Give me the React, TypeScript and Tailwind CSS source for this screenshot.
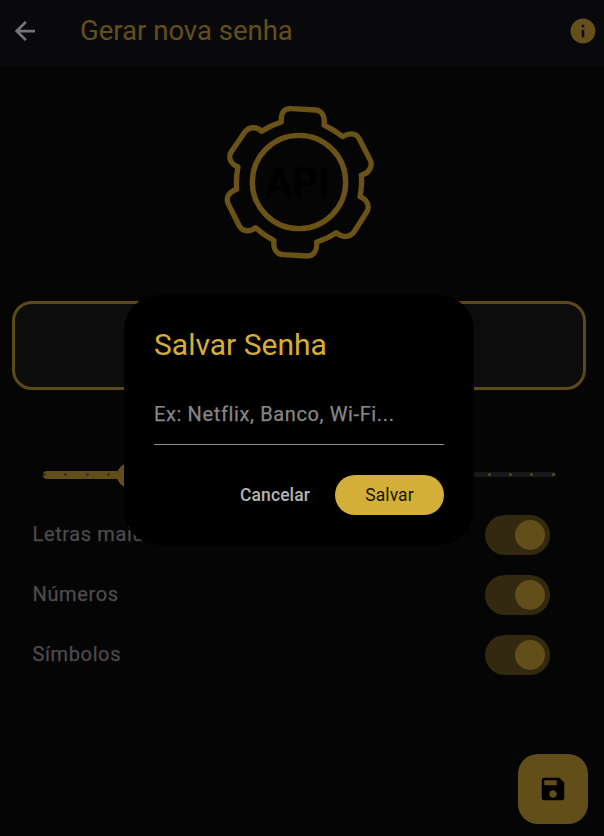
import { MdInfo, MdSave } from "react-icons/md";

const ticks = Array.from({ length: 25 }, (_, i) => i);
const value = 4;

function BackArrow() {
  return (
    <svg viewBox="0 0 24 24" className="h-[30px] w-[30px] text-[#757577]" fill="none" stroke="currentColor" strokeWidth="2.2">
      <path d="M20 12H5.4M12.7 4.7L5.4 12L12.7 19.3" />
    </svg>
  );
}

function GearLogo() {
  return (
    <div className="relative ml-[214px] mt-[30px] flex h-[170px] w-[170px] items-center justify-center">
      <svg viewBox="0 0 510 510" className="absolute inset-0 h-full w-full" fill="none" stroke="#6b5217" strokeWidth="16" strokeLinejoin="round">
        <circle cx="255" cy="258" r="140" />
        <path d="M202 78C200 51 210 36 233 38L305 42C324 43 334 62 330 87Q361 102 386 122C405 111 424 110 435 127L470 195C476 215 463 232 442 237Q445 270 438 302C458 309 467 328 460 345L420 408C406 426 383 425 367 410Q339 429 308 438C310 463 300 480 280 480L207 476C186 475 177 458 180 433Q151 419 125 395C108 408 86 408 76 390L42 322C34 303 47 287 68 280Q65 247 72 213C52 204 42 188 50 170L93 107C108 90 130 93 143 106Q170 88 202 78Z" />
      </svg>
      <span className="relative pr-px pt-[3px] text-[38px] font-medium leading-none tracking-[1.5px] text-black [-webkit-text-stroke:1.5px_black] [stroke-linejoin:round]">API</span>
    </div>
  );
}

function LengthSlider() {
  return (
    <div className="relative ml-[42.5px] mt-[72px] flex h-[26px] w-[513px] items-center">
      <div className="-mt-px h-[5px] w-full rounded-full bg-[#18181a]" />
      <div className="absolute left-0 top-[9px] h-2 w-[88px] rounded-full bg-[#624e19]" />
      {ticks.map((i) => (
        <span
          key={i}
          className={
            i <= value
              ? "absolute top-[11px] h-[3px] w-[3px] rounded-full bg-[#3c3019]"
              : "absolute top-[11px] h-[3px] w-[3px] rounded-full bg-[#5a481b]"
          }
          style={{ left: 0.7 + i * 21.18 }}
        />
      ))}
      <div className="absolute left-[74.5px] top-[0.5px] h-[25px] w-[25px] rounded-full bg-[#624e19]" />
    </div>
  );
}

function Option({ label }: { label: string }) {
  return (
    <div className="flex h-[60px] items-center justify-between pl-[32.5px] pr-[54px]">
      <span className="pb-0.5 text-[20px] tracking-[0.625px] text-[#4c4c4c] [-webkit-text-stroke:0.25px_#4c4c4c]">{label}</span>
      <div className="flex h-10 w-[65px] items-center justify-end rounded-full bg-[#322910] pr-[5px]">
        <div className="h-[30px] w-[30px] rounded-full bg-[#624e19]" />
      </div>
    </div>
  );
}

function SaveDialog() {
  return (
    <div className="absolute left-[124px] top-[295px] flex h-[250px] w-[350px] flex-col rounded-[35px] bg-black px-[30px] pt-[30px]">
      <h2 className="text-[30px] leading-10 text-[#d4af37]">Salvar Senha</h2>
      <div className="mt-5 flex h-[60px] items-center border-b border-[#8e8e93] pb-0.5 text-[20px] tracking-[0.625px] text-[#868686] [-webkit-text-stroke:0.25px_#868686]">
        Ex: Netflix, Banco, Wi-Fi...
      </div>
      <div className="mt-[30px] flex items-center justify-end gap-[25px] text-[17.5px] tracking-[0.1px]">
        <button className="font-medium text-[#b3b3b3]">Cancelar</button>
        <button className="h-10 w-[109px] rounded-full bg-[#d4af37] text-[#171306]">Salvar</button>
      </div>
    </div>
  );
}

export default function App() {
  return (
    <div className="relative h-[836px] w-[604px] overflow-hidden bg-[#050505] font-[Roboto,sans-serif]">
      <header className="flex h-[66px] items-center bg-[#09090b] pb-1 pl-[10px] pr-[6px]">
        <BackArrow />
        <h1 className="ml-10 flex-1 text-[27.5px] text-[#634f1a]">Gerar nova senha</h1>
        <MdInfo className="h-[30px] w-[30px] text-[#654f1a]" />
      </header>
      <GearLogo />
      <div className="ml-[12px] mt-[35px] h-[89px] w-[574px] rounded-[20px] border-[3px] border-[#5c4918] bg-[#0c0c0c]" />
      <LengthSlider />
      <div className="mt-[17px]">
        <Option label="Letras maiúsculas" />
        <Option label="Números" />
        <Option label="Símbolos" />
      </div>
      <div className="absolute left-[518px] top-[754px] flex h-[70px] w-[70px] items-center justify-center rounded-[20px] bg-[#624e19]">
        <MdSave className="h-[30px] w-[30px] text-black" />
      </div>
      <SaveDialog />
    </div>
  );
}
